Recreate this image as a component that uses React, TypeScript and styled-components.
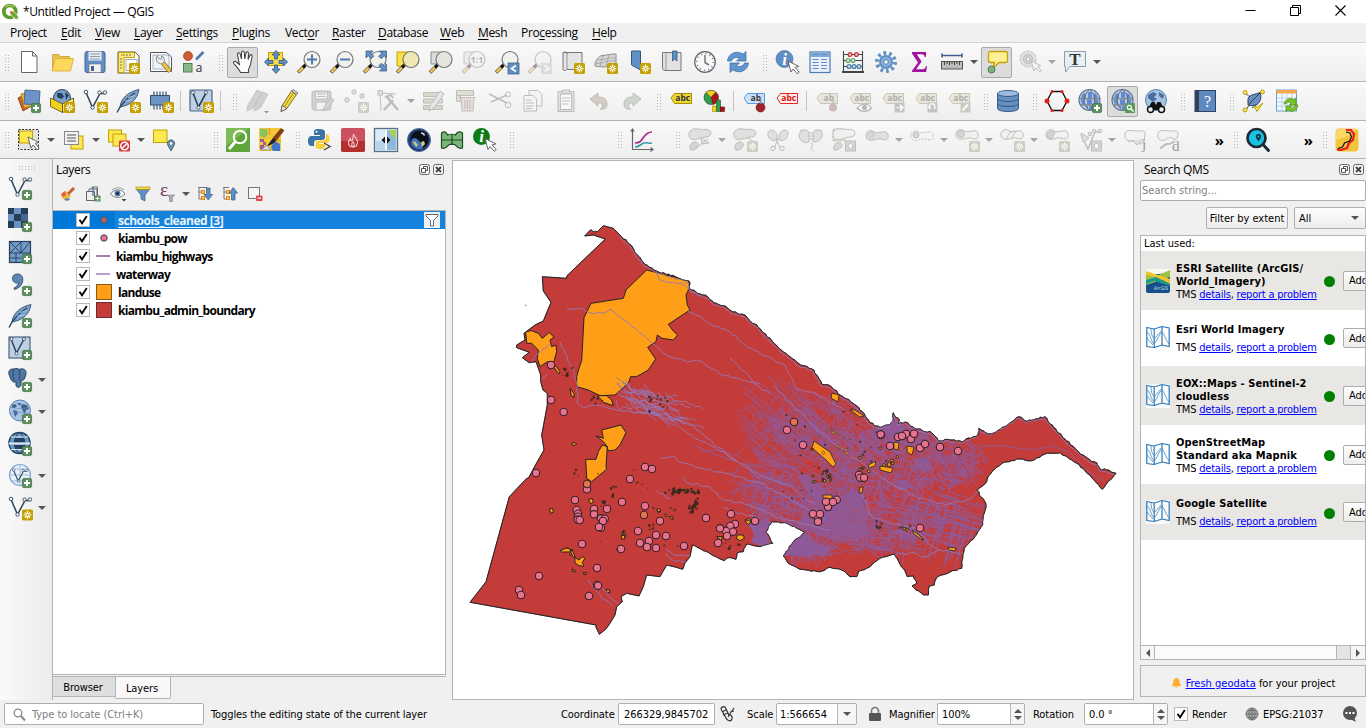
import React from "react";
import styled, { createGlobalStyle } from "styled-components";

const UI = '"Open Sans", "Noto Sans", sans-serif';
const TAHOMA = '"DejaVu Sans Condensed", "DejaVu Sans", sans-serif';
const SERIF = '"Liberation Serif", serif';
const LINE = "#b4b4b4";

const Global = createGlobalStyle`
  body { margin: 0; background: #f0f0f0; overflow: hidden; }
  * { box-sizing: border-box; }
`;

/* ---------- shared icon parts ---------- */
const Star = ({ x = 13, y = 13, c = "#c4a000" }: { x?: number; y?: number; c?: string }) => (
  <g transform={`translate(${x} ${y})`}>
    <rect width="11" height="11" rx="1.5" fill={c} />
    <path d="M5.5 1.5v8M1.500 5.500h8M2.800 2.800l5.400 5.400M8.200 2.800l-5.400 5.400" stroke="#fff" strokeWidth="1.200" />
    <circle cx="5.500" cy="5.500" r="1.100" fill={c} />
  </g>
);
const Plus = ({ x = 14, y = 14 }: { x?: number; y?: number }) => (
  <g transform={`translate(${x} ${y})`}>
    <rect x=".4" y=".4" width="9.200" height="9.200" rx="1.500" fill="#5b8f5c" stroke="#3f6f40" strokeWidth=".7" />
    <path d="M5 2v6M2 5h6" stroke="#fff" strokeWidth="2" />
  </g>
);
const Cursor = ({ x = 12, y = 10 }: { x?: number; y?: number }) => (
  <path transform={`translate(${x} ${y})`} d="M0 0l3 11 2.200-3 4 4.800 2-1.600-4-4.800 3.600-1z" fill="#fff" stroke="#555" strokeWidth=".9" />
);
const Lens = ({ fill = "#f2f2ec" }: { fill?: string }) => (
  <g>
    <path d="M1 22.500l7-7" stroke="#555" strokeWidth="3.600" />
    <path d="M1.500 22l4.500-4.500" stroke="#f5c84c" strokeWidth="2.400" />
    <path d="M6 17.500l3-3" stroke="#111" strokeWidth="2.600" />
    <circle cx="15" cy="9.500" r="8" fill={fill} stroke="#777" strokeWidth="1.200" />
  </g>
);
const Nodes = () => (
  <g fill="none" stroke="#2f4458">
    <path d="M3 3.500l6.500 15L17 4.500h5" strokeWidth="1.500" />
    <g fill="#fff" strokeWidth=".9">
      <circle cx="3" cy="3" r="1.800" /><circle cx="9.500" cy="18.500" r="1.700" /><circle cx="16.500" cy="3.500" r="1.700" /><circle cx="22" cy="3.500" r="1.700" />
    </g>
  </g>
);
const Feather = () => (
  <g>
    <path d="M4 18C5 9 12 3 23 .5 22 6 20 10 16 13c-4 3-7 4-10 4.500z" fill="#7ba0cc" stroke="#33526f" strokeWidth=".9" />
    <path d="M1 23.500C5 15 11 9 19 4" stroke="#25415c" strokeWidth="1.300" fill="none" />
    <path d="M9 12l8-1M12 8.500l7-2" stroke="#b7cde6" strokeWidth=".8" fill="none" />
  </g>
);
const QmsGlobe = () => (
  <g>
    <circle cx="11.500" cy="11" r="10.500" fill="#b9cde4" stroke="#5b7394" strokeWidth="1.100" />
    <path d="M5 4.500h3v4.500H3zM10 3h4v6h-4zM15.500 4.500h2.500l2 4.500h-4.500zM2.500 10.500H7v5H4zM9 10.500h5v5H9zM16 10.500h4.500l-1 5H16zM7 17h3v3zM11 17h4v3.500h-4z" fill="#4f7cd0" opacity=".85" />
    <path d="M11.500.5c-7 6-7 15 0 21M11.500.5c7 6 7 15 0 21M1 9.800h21M2.500 16h18" stroke="#6a6f70" fill="none" strokeWidth="1" />
  </g>
);
const Tag = ({ t = "abc", fill, stroke, color, y = 5 }: { t?: string; fill: string; stroke: string; color: string; y?: number }) => (
  <g transform={`translate(0 ${y})`}>
    <path d="M2 5L5.500.5h17v10h-17z" fill={fill} stroke={stroke} />
    <text x="13.800" y="8.400" fontSize="8.500" fontWeight="700" fontFamily={UI} fill={color} textAnchor="middle">{t}</text>
  </g>
);
const Grey = ({ children, o = 0.75 }: { children: React.ReactNode; o?: number }) => (
  <g fill="#d9d9d9" stroke="#acaca7" strokeWidth="1" opacity={o}>{children}</g>
);
const Blob = ({ v = 0 }: { v?: number }) => (
  <path d={["M1 8C0 2 5 0 10 1c4 1 11-1 13 3 0 4-2 5-5 5-4 0-5 2-9 2-4 1-7 1-8-3z", "M1 8C0 2 6 0 9 3c4 2 8-1 12 0 3 2 3 7 0 8-4 0-6-2-9-1-5 2-10 2-11-2z"][v]} />
);
const SmallStar = () => <Star x={14} y={13} c="#c4c1b2" />;

const icons: Record<string, React.ReactNode> = {
  newDoc: <path d="M4.500 1.500h11l4.500 4.500v16.500H4.500zM15.500 1.500V6H20" fill="#fff" stroke="#666" />,
  open: <g><path d="M2.500 20V4.500h6l2 2h9V9" fill="#eac24f" stroke="#c99b2a" strokeWidth=".8" /><path d="M2 21L5 8.500h18.500l-3 12.500z" fill="#fbd75b" stroke="#d9aa2f" strokeWidth=".8" /></g>,
  save: <g><rect x="2" y="1.500" width="20" height="21" rx="2" fill="#5f8fc4" stroke="#41658e" /><rect x="5.500" y="1.500" width="13" height="9" fill="#e9eef4" /><path d="M7 4h10M7 6.500h10M7 9h10" stroke="#8e99a5" /><rect x="6" y="14" width="12" height="8.500" fill="#f1f1f1" stroke="#778" strokeWidth=".6" /><rect x="8" y="16" width="3" height="5" fill="#41658e" /></g>,
  layout: <g><path d="M2 2h17l4 4v17H2z" fill="#fff" stroke="#555" /><path d="M2.500 2.500h16v5H8v15H2.500z" fill="#f7e98e" stroke="#c4a000" /><path d="M5 5h1.500M8 4v2M11 4v2M14 4v2M4 9h2M4 12h2M4 15h2M4 18h2" stroke="#8a7200" /><rect x="10" y="9.500" width="11" height="11" fill="none" stroke="#aaa" /><Star /></g>,
  layoutMgr: <g><path d="M1.500 2.500h16l5 4.500v14.500h-21z" fill="#fff" stroke="#555" /><rect x="4" y="5" width="16" height="14" fill="#f0f4fa" stroke="#8ba0c0" strokeWidth=".8" /><path d="M14 13l7 8.500" stroke="#8a7420" strokeWidth="4.600" /><path d="M14 13l7 8.500" stroke="#e8c44a" strokeWidth="3" /><path d="M8.500 5.500c0 2 .5 3 2.500 3.500s2-1 1.500-3c3 1 3.500 4 2 6.500-2 2.500-6 1-7-2-.5-2-.2-4 1-5z" fill="#eee" stroke="#777" strokeWidth=".9" /></g>,
  style: <g><circle cx="6" cy="6" r="4.500" fill="#cf5b36" stroke="#9b3b1f" strokeWidth=".7" /><path d="M14 9.500l7.500-7.500" stroke="#4d7ab0" strokeWidth="2.600" /><rect x="1.500" y="13.500" width="8.500" height="8.500" fill="#8ab68a" stroke="#50804f" /><text x="13.500" y="22" fontFamily={UI} fontSize="12.500" fill="#333">a</text></g>,
  hand: <path d="M8.500 22.500C7 19 4 16 1.800 13.500c-1.200-2 1.200-3 2.600-1.500l3 2.500L5.500 4.500c-.3-2 2-2.500 2.600-.6L9.500 9V2.500c0-2 2.700-2 2.800 0L12.800 9l1.200-6c.5-1.800 2.700-1.200 2.500.6L16 9.500l1.800-4c.8-1.600 2.800-.8 2.300 1-1 4.500-1.200 9-3.600 13v3z" fill="#fff" stroke="#444" strokeWidth="1.100" transform="translate(1 0)" />,
  pan: <g><rect x="4.500" y="2.500" width="14" height="13" fill="#f7e04a" stroke="#c4a000" /><path d="M12 .5l4 4.500h-2.500v4h-3V5H8zM23.500 12l-4 4v-2.500H15v-3h4.500V8zM12 23.500l4-4.500h-2.500v-4h-3v4H8zM.5 12l4-4v2.500H9v3H4.500V16z" fill="#5f8fc4" stroke="#35577d" strokeWidth=".8" /></g>,
  zoomIn: <g><Lens /><path d="M15 4.500v10M10 9.500h10" stroke="#4d7ab0" strokeWidth="2" /></g>,
  zoomOut: <g><Lens /><path d="M10 9.500h10" stroke="#4d7ab0" strokeWidth="2" /></g>,
  zoomFull: <g><Lens /><path d="M3 1h7L7.800 3.200l3 3L8.200 8.800l-3-3L3 8zM23.500 1v7l-2.200-2.200-3 3-2.600-2.600 3-3L16.500 1zM23.500 21h-7l2.200-2.200-3-3 2.600-2.600 3 3 2.200-2.200z" fill="#5f8fc4" stroke="#35577d" strokeWidth=".7" /></g>,
  zoomSel: <g><path d="M1 2h14v14H1z" fill="#f7e04a" stroke="#c4a000" /><Lens fill="#efe7b4" /></g>,
  zoomLayer: <g><path d="M2 2h12v12H2z" fill="#ddd" stroke="#888" /><Lens fill="#e4e6de" /></g>,
  zoomNative: <g opacity=".4"><path d="M2 2h12v12H2z" fill="#ddd" stroke="#888" /><Lens /><text x="15" y="13" fontFamily={UI} fontSize="9" fontWeight="700" textAnchor="middle" fill="#555">1:1</text></g>,
  zoomLast: <g><Lens /><rect x="13" y="13" width="11" height="11" fill="#5f8fc4" stroke="#35577d" strokeWidth=".7" /><path d="M21 15.500l-4.500 3 4.500 3" stroke="#fff" strokeWidth="1.700" fill="none" /></g>,
  zoomNext: <g opacity=".4"><Lens /><rect x="13" y="13" width="11" height="11" fill="#bbb" /><path d="M16.500 15.500l4.500 3-4.500 3" stroke="#fff" strokeWidth="1.700" fill="none" /></g>,
  mapView: <g><path d="M2 2.500h19v17H5.500a2 2 0 01-3.500-2z" fill="#e4e4e4" stroke="#777" /><path d="M6 3v16" stroke="#999" /><path d="M2 2.500c2-1 4-.5 4 1.500" stroke="#777" fill="none" /><Star /></g>,
  view3d: <g><path d="M1 16C1 10 5 6 8 5.500c5 0 9-2 14-1.500v11c-5-2-8 2-12 2-3-.5-6 0-9-1z" fill="#d6d6d6" stroke="#8e8e8e" /><path d="M4 10c6 0 12-3 18-2M2 13.500c8 0 12-4 20-2.500M9 5.500L6 16M15 4.500l-3 12" stroke="#a0a0a0" strokeWidth=".8" fill="none" /><Star /></g>,
  bookmark: <g><path d="M4.500 1h9v19l-9-5z" fill="#5f8fc4" stroke="#35577d" /><Star /></g>,
  bookmarks: <g><path d="M2.500 2.500h18.500v18H6a3 3 0 01-3.500-2z" fill="#e2e2e2" stroke="#777" /><path d="M6 3v17" stroke="#999" /><path d="M12.500 1h4.500v10l-2.300-2-2.200 2z" fill="#5f8fc4" stroke="#35577d" strokeWidth=".8" /></g>,
  clock: <g><circle cx="12" cy="12" r="10.300" fill="#f7f7f7" stroke="#666" strokeWidth="1.200" /><circle cx="12" cy="12" r="8.300" fill="none" stroke="#4d7ab0" strokeWidth="1.500" strokeDasharray="1 3.350" /><path d="M12 5v7.500l4 2.500" stroke="#777" strokeWidth="1.500" fill="none" /></g>,
  refresh: <g fill="#5f96d0" stroke="#3b6ba3" strokeWidth=".7"><path d="M1.500 11C2 4 10-.5 17 4l3-2.500V11h-9.500l3-3c-3-1.500-7 0-8 3z" /><path d="M22.500 13c-.5 7-8.500 11.500-15.500 7l-3 2.500V13h9.500l-3 3c3 1.500 7 0 8-3z" /></g>,
  identify: <g><circle cx="9.500" cy="9" r="8.500" fill="#5f8fc4" stroke="#41658e" strokeWidth=".6" /><text x="9.500" y="14.500" fontFamily={SERIF} fontStyle="italic" fontWeight="700" fontSize="17" fill="#fff" textAnchor="middle">i</text><Cursor x={13} y={11} /></g>,
  table: <g><rect x="2" y="2" width="20" height="20.500" fill="#e9f1fb" stroke="#4d7ab0" strokeWidth="1.200" /><rect x="2.500" y="2.500" width="19" height="4.500" fill="#7fa9d8" /><path d="M4.500 4.500h6M13 4.500h6M4.500 9.500h6M13 9.500h6M4.500 12.500h6M13 12.500h6M4.500 15.500h6M13 15.500h6M4.500 18.500h6M13 18.500h6" stroke="#5f8fc4" strokeWidth="1.200" /></g>,
  abacus: <g fill="none"><path d="M2.500 1v21M21.500 1v21M2.500 4.500h19M2.500 10.500h19M2.500 16.500h19" stroke="#444" strokeWidth="1.100" /><path d="M1 22h22" stroke="#444" strokeWidth="2" /><g strokeWidth="1.300"><g stroke="#c03535" fill="#f3c6c6"><circle cx="9" cy="4.500" r="1.900" /><circle cx="15.500" cy="4.500" r="1.900" /></g><g stroke="#6aa66a" fill="#d9f0d9"><circle cx="7" cy="10.500" r="1.900" /><circle cx="12" cy="10.500" r="1.900" /></g><g stroke="#5080a8" fill="#cde2f3"><circle cx="8" cy="16.500" r="1.900" /><circle cx="13" cy="16.500" r="1.900" /><circle cx="18" cy="16.500" r="1.900" /></g></g></g>,
  gear: <g><circle cx="12" cy="12" r="9" fill="none" stroke="#5f8fc4" strokeWidth="4" strokeDasharray="2.700 2.955" /><circle cx="12" cy="12" r="6" fill="#8cb1de" stroke="#5f8fc4" strokeWidth="2" /><circle cx="12" cy="12" r="2.300" fill="#f7f7f7" stroke="#4d7ab0" /></g>,
  sigma: <path d="M5 2h14v5h-1.200c-.5-2-1.500-2.700-3.500-2.700H9.800L14.600 11.500 9.200 19.200h6.300c2 0 3-1 3.500-3.200h1l-.8 6H5v-1.300l6-8.200L5 3.400z" fill="#a312a0" />,
  measure: <g><path d="M2 5.500h20M2 3.500v4M22 3.500v4" stroke="#3d5f8a" strokeWidth="1.600" /><rect x="1.500" y="11.500" width="21" height="7.500" fill="#bdbdbd" stroke="#555" /><path d="M4.500 12v3M7 12v2M9.500 12v3M12 12v2M14.500 12v3M17 12v2M19.500 12v3" stroke="#444" /></g>,
  tip: <g><path d="M5.500 1.500h15a2 2 0 012 2v7a2 2 0 01-2 2H14l-6 6 1.500-6h-4a2 2 0 01-2-2v-7a2 2 0 012-2z" fill="#fcef94" stroke="#c4a000" strokeWidth="1.300" /><circle cx="6.500" cy="19.500" r="3.500" fill="#7fb07f" stroke="#50804f" /></g>,
  action: <Grey><circle cx="10" cy="9" r="8" strokeDasharray="3 1.500" /><circle cx="10" cy="9" r="4.500" fill="#c9c9c9" /><path d="M8.500 6.500l4.500 2.500-4.500 2.500z" fill="#fff" /><path d="M13 11l3 10 2-3 4 4 1.500-1.500-4-4 3-1z" fill="#f4f4f4" /></Grey>,
  textAnn: <g><path d="M1.500 1.500h21v15H7L2.500 22v-5.500h-1z" fill="#e8f0f6" stroke="#8a9aa6" /><text x="12" y="14.500" fontFamily={SERIF} fontWeight="700" fontSize="17" fill="#333" textAnchor="middle">T</text></g>,

  dsManager: <g strokeWidth=".9"><path d="M1 9l12-6 5 12-12 7z" fill="#c8622d" stroke="#8f4019" /><path d="M4 5l14-2 2 13-13 3z" fill="#eab33c" stroke="#a77a12" /><path d="M8 1l15 1-1 14-15-1z" fill="#6b93c5" stroke="#3d628f" /><Plus /></g>,
  geopkg: <g><circle cx="12" cy="9" r="8.500" fill="#7d9fc6" stroke="#24425f" /><path d="M7 4l5 0 2 4-3 2-4-2zM15 3l4 3-3 5" fill="#24425f" /><path d="M.5 9l12 6v8.500l-12-6z" fill="#f2d21f" stroke="#564a10" strokeWidth=".8" /><path d="M12.500 15l11-6v8.500l-11 6z" fill="#fbe65c" stroke="#564a10" strokeWidth=".8" /><Star x={14} /></g>,
  shp: <g><Nodes /><Star x={14} /></g>,
  spatialite: <g><Feather /><Star x={14} /></g>,
  memory: <g><path d="M5 2.500v18M8 2.500v18M11 2.500v18M14 2.500v18M17 2.500v18" stroke="#33526f" strokeWidth="1.200" /><rect x="1.500" y="6.500" width="19" height="9.500" fill="#6b93c5" stroke="#33526f" /><Star x={14} /></g>,
  virtual: <g><rect x="1" y="1" width="22" height="21" rx="1" fill="#bdd0e6" stroke="#4a6380" strokeWidth="1.200" /><path d="M4 4l5.500 14L17 4" stroke="#2f4458" strokeWidth="1.600" fill="none" /><circle cx="4" cy="3.500" r="1.600" fill="#fff" stroke="#2f4458" strokeWidth=".8" /><circle cx="17" cy="3.500" r="1.600" fill="#fff" stroke="#2f4458" strokeWidth=".8" /><circle cx="9.500" cy="18.500" r="1.600" fill="#fff" stroke="#2f4458" strokeWidth=".8" /><Star x={14} /></g>,
  edits: <Grey><path d="M2 22l1-6L12 1l5 2.500L8 19zM9 22l1-6L18 3l5 2.500L15 19z" fill="#c9c4c4" stroke="#b9b4b4" /><path d="M19 22h5l-2.500 2.500z" fill="#777" stroke="none" /></Grey>,
  pencil: <g><path d="M3 22.500l1.200-6L13.500 2l5 3.500L8.800 19.500z" fill="#f2d944" stroke="#6f6118" strokeWidth=".9" /><path d="M6.500 17.500L15.500 4" stroke="#b39a1c" strokeWidth="1.200" /><path d="M3 22.500l1.200-6 4.600 3z" fill="#eee" stroke="#555" strokeWidth=".8" /><path d="M13.500 2l1.500-1.500 5 3.500-1.500 1.500z" fill="#ddd" stroke="#555" strokeWidth=".8" /></g>,
  saveEdits: <Grey><rect x="1" y="2" width="19" height="19" rx="2" fill="#c6c6c6" /><rect x="4.500" y="3" width="12" height="7" fill="#f3f3f3" /><path d="M6 5h9M6 7.500h9" /><rect x="5" y="13" width="10" height="8" fill="#f3f3f3" /><path d="M12 22l1-4 7-9 3 2-7 9z" fill="#ccc" /></Grey>,
  addPoint: <Grey><circle cx="10" cy="3" r="2.200" /><circle cx="3" cy="11" r="2.200" /><circle cx="18" cy="7" r="2.200" /><g stroke="none"><SmallStar /></g></Grey>,
  vertex: <Grey><path d="M4 22L3 4l16 1" fill="none" /><rect x="1" y="1.500" width="4.500" height="4.500" /><path d="M7 21l9-10M10 8l11 13" strokeWidth="2.500" fill="none" /><path d="M8 8l6-2 2 3" fill="none" strokeWidth="2" /></Grey>,
  multiEdit: <Grey><path d="M1.500 3.500h19v4h-19zM1.500 10h19v4h-19zM1.500 16.500h19v4h-19z" fill="#cfcfc0" /><path d="M7 22l1-5L18 2l4 3-10 14z" fill="#e2e2e2" /></Grey>,
  trash: <Grey><path d="M1.500 1.500h17v5h-17zM1.500 6.500h4v6h-4z" fill="#d8d8cc" /><path d="M4 8.500h17M6 8.500l1 13.500h11l1-13.500zM10 11v9M12.500 11v9M15 11v9" fill="#e2d6d6" stroke="#bba9a9" /></Grey>,
  cut: <Grey><path d="M1 5l18 9M3 13l16-7" fill="none" strokeWidth="1.600" /><circle cx="20" cy="5.500" r="2.600" fill="none" /><circle cx="20" cy="16" r="2.800" fill="none" /></Grey>,
  copy: <Grey><path d="M8 1.500h9l4 4V17H8z" fill="#f2f2f2" /><path d="M3 6.500h9l3.500 3.500V22H3z" fill="#f6f6f6" /><path d="M5 11h6M5 14h8M5 17h8M5 19.500h6" /></Grey>,
  paste: <Grey><rect x="4" y="2.500" width="16" height="20" /><rect x="6.500" y="5" width="11" height="15.500" fill="#fafafa" /><path d="M8 9h8M8 12h8M8 15h6" /><rect x="8.500" y="1" width="7" height="3.500" /></Grey>,
  undo: <Grey><path d="M3 10l8-6v4c6 0 9 2 9 7s-3 5-7 5.500c2-1.500 3-3 2-5-.6-1.300-2-1.500-4-1.500V17z" fill="#cbbfb1" /></Grey>,
  redo: <Grey><path d="M21 10l-8-6v4c-6 0-9 2-9 7s3 5 7 5.500c-2-1.500-3-3-2-5 .6-1.300 2-1.500 4-1.500V17z" fill="#c6cdbf" /></Grey>,
  label: <Tag fill="#ecd733" stroke="#a68d00" color="#333" y={4} />,
  diagram: <g><circle cx="9" cy="8.500" r="7" fill="#2f9e46" stroke="#333" strokeWidth=".6" /><path d="M9 8.500L4 3.500a7 7 0 0110-.2z" fill="#f2cf1b" stroke="#333" strokeWidth=".5" /><path d="M9 8.500l5-5.200a7 7 0 01-3 12.200z" fill="#b5121b" stroke="#333" strokeWidth=".5" /><rect x="10.500" y="17" width="4" height="5.500" fill="#f2cf1b" stroke="#a68d00" strokeWidth=".6" /><rect x="14.500" y="11" width="4" height="11.500" fill="#2f9e46" stroke="#14592a" strokeWidth=".6" /><rect x="18.500" y="18" width="4" height="4.500" fill="#b5121b" stroke="#600" strokeWidth=".6" /></g>,
  labelPin: <g><Tag t="ab" fill="#c9e2fb" stroke="#5a9be0" color="#333" y={4} /><circle cx="18.500" cy="18.500" r="4.500" fill="#a3232a" stroke="#6d1319" strokeWidth=".6" /><path d="M18.500 15V9" stroke="#888" strokeWidth="1.500" /></g>,
  labelRed: <Tag fill="#fff0f0" stroke="#f02020" color="#e01010" y={4} />,
  lb1: <g opacity=".5"><Tag t="ab" fill="#ded9c4" stroke="#a09a80" color="#666" y={4} /><circle cx="18" cy="18.500" r="4" fill="#a9807f" /><path d="M18 15v-6" stroke="#988" strokeWidth="1.500" /></g>,
  lb2: <g opacity=".5"><Tag fill="#ded9c4" stroke="#a09a80" color="#666" y={4} /><path d="M9 19c4-5 11-5 14.500 0-4 4.500-10 4.500-14.500 0z" fill="#fff" stroke="#777" strokeWidth="1.200" /><circle cx="16.500" cy="18.500" r="2.500" fill="#777" /></g>,
  lb3: <g opacity=".5"><Tag fill="#ded9c4" stroke="#a09a80" color="#666" y={4} /><rect x="13.500" y="13.500" width="10" height="10" fill="#999" /><path d="M15.500 18.500h4v-3l3 3-3 3.500v-3" fill="#fff" stroke="#fff" /></g>,
  lb4: <g opacity=".5"><Tag fill="#ded9c4" stroke="#a09a80" color="#666" y={4} /><rect x="13.500" y="13.500" width="10" height="10" fill="#999" /><path d="M16 20a3 3 0 114 0M16 20v-3" fill="none" stroke="#fff" strokeWidth="1.500" /></g>,
  lb5: <g opacity=".5"><Tag fill="#ded9c4" stroke="#a09a80" color="#666" y={4} /><rect x="13.500" y="13.500" width="10" height="10" fill="#aaa68e" /><path d="M15.500 21.500l5.500-6" stroke="#fff" strokeWidth="2" /></g>,
  db: <g stroke="#30527a" strokeWidth=".9"><path d="M1.500 4.500v15c0 4 21 4 21 0v-15" fill="#6490c4" /><ellipse cx="12" cy="4.500" rx="10.500" ry="3" fill="#9dbce0" /><path d="M1.500 9.500c0 4 21 4 21 0M1.500 14.500c0 4 21 4 21 0" fill="none" /></g>,
  hexagon: <g><path d="M7 2.500h10l5 9.500-5 9.500H7L2 12z" fill="none" stroke="#111" strokeWidth="1.300" /><g fill="#e81c1c"><circle cx="7" cy="2.500" r="1.500" /><circle cx="17" cy="2.500" r="1.500" /><circle cx="7" cy="21.500" r="1.500" /><circle cx="17" cy="21.500" r="1.500" /><circle cx="2" cy="12" r="2.500" /><circle cx="22" cy="12" r="2.500" /></g></g>,
  qmsAdd: <g><QmsGlobe /><Plus /></g>,
  qmsSearch: <g><QmsGlobe /><rect x="14" y="14" width="10" height="10" rx="1" fill="#5b9a5c" /><circle cx="18.300" cy="18.300" r="2" fill="none" stroke="#fff" strokeWidth="1.200" /><path d="M20 20l2.500 2.500" stroke="#fff" strokeWidth="1.400" /></g>,
  binoculars: <g><circle cx="12" cy="11" r="10.500" fill="#a6c4e4" stroke="#5a80ae" /><path d="M4 6l5-3 4 2-3 3 3 2-4 3-5-4zM15 3l5 3-1 4-4-3z" fill="#4b6f9d" /><path d="M3.500 21l4-8h3l1.500 3 1.500-3h3l4 8z" fill="#111" /><circle cx="6.500" cy="20.500" r="3" fill="#eee" stroke="#111" strokeWidth="1.500" /><circle cx="17.500" cy="20.500" r="3" fill="#eee" stroke="#111" strokeWidth="1.500" /></g>,
  help: <g><rect x="2" y="1.500" width="20.500" height="21" fill="#5f88c0" stroke="#2c4263" /><rect x="2" y="1.500" width="4" height="21" fill="#33415a" /><text x="14.500" y="17.500" fontFamily={SERIF} fontSize="16" fill="#fff" textAnchor="middle">?</text></g>,
  topology: <g><path d="M6 10C7 5 13 6 18 3.500c2 5 0 10-3 12-3 1-8 2-9 0z" fill="#6a90c4" stroke="#2c4263" /><path d="M3 4l5 4M4 21l5-8 9-9M14 16l-4 3" stroke="#333" strokeWidth=".9" fill="none" /><g fill="#fbe640" stroke="#a68d00" strokeWidth=".8"><circle cx="3" cy="3.500" r="2" /><circle cx="20.500" cy="3" r="2" /><circle cx="3" cy="21" r="2" /><path d="M12 17l3 5.500 6-8.500-5.500 4z" /></g></g>,
  tableRefresh: <g><rect x="1.500" y="1" width="20" height="21" fill="#f3f8fc" stroke="#6aa0d0" /><rect x="1.500" y="1" width="20" height="3.500" fill="#f5a94a" /><path d="M2 9h19M2 13h19M2 17h19M7 4v18M12 4v18M17 4v18" stroke="#a9cbe4" strokeWidth=".8" /><path d="M9 15c1-5 7-7 10-4l2-2v7h-7l2-2c-2-2-4-1-5 1zM23 16c-1 6-7 8-10 5l-2 2v-6h6l-2 2c2 1 4 0 5-3z" fill="#7cc428" stroke="#4a8a10" strokeWidth=".7" /></g>,

  select: <g><rect x="1.500" y="1.500" width="20" height="20" fill="#e4e4e4" stroke="#333" strokeDasharray="2 1.500" /><rect x="2.500" y="3" width="13" height="12" fill="#fce94f" stroke="#c4a000" /><Cursor x={11} y={9} /></g>,
  selectForm: <g><rect x="9" y="8" width="12" height="13" fill="#fce94f" stroke="#c4a000" /><rect x="2.500" y="3.500" width="14" height="13" fill="#f1f1f1" stroke="#888" /><path d="M5 7h9M5 10h9M5 13h9" stroke="#888" strokeWidth="1.500" /></g>,
  deselect: <g><rect x="1.500" y="2" width="13" height="12" fill="#fce94f" stroke="#c4a000" /><rect x="6" y="6" width="13" height="12" fill="#fce94f" stroke="#c4a000" /><rect x="12" y="12.500" width="11" height="11" rx="1" fill="#d9363e" /><circle cx="17.500" cy="18" r="3.800" fill="none" stroke="#fff" strokeWidth="1.500" /><path d="M15 20.500l5-5" stroke="#fff" strokeWidth="1.400" /></g>,
  selectLoc: <g><rect x="1.500" y="2" width="13.500" height="12.500" fill="#fce94f" stroke="#c4a000" /><path d="M19 23l-3-5.500a3.600 3.600 0 116 0z" fill="#6d8fa8" stroke="#47697f" /><circle cx="19" cy="15.500" r="1.300" fill="#fff" /></g>,
  osmGreen: <g><rect width="24" height="24" fill="#5fa63a" /><path d="M0 0h24L0 18z" fill="#7dbb55" /><circle cx="14" cy="9" r="6.300" fill="none" stroke="#fff" strokeWidth="2" /><path d="M9.500 13.500L3 21" stroke="#fff" strokeWidth="3" /></g>,
  osmMap: <g><rect width="22" height="23" fill="#f3c93a" /><path d="M1 1h7l1 5-3 4-5-2z" fill="#8cc05a" /><path d="M1 11h4v3H1zM4 14h3v3H4zM1 17h4v4H1z" fill="#a35a94" /><path d="M10 0l1 7M15 22l-2-7 5-3 4 1" stroke="#e8a020" strokeWidth="1.500" fill="none" /><path d="M12 19l4-6 5 3v7h-7z" fill="#3f74d0" /><path d="M2 22l6-5 4 5z" fill="#d5dcec" stroke="#555" strokeWidth=".5" /><path d="M14 10L22 .500l3 2-8 10z" fill="#8a3c14" stroke="#5a2408" strokeWidth=".6" /><path d="M8 18l6-8 3 2.500c-2 3-5 4.500-9 5.500z" fill="#222" /></g>,
  python: <g><path d="M11 1c-5 0-5 1.500-5 3v3h6v1H4c-3 0-4 2-4 5s1 5 3.500 5H6v-3c0-2 1.500-3 3-3h5c2 0 3-1 3-3V4c0-2-2-3-6-3z" fill="#3b73a6" /><path d="M12 21c5 0 5-1.500 5-3v-2h-6v-1h7c3 0 3.500-2 3.500-4.500S20.500 6 18 6v3c0 2-1 3.500-3 3.500h-4c-2 0-3.500 1-3.500 3V18c0 2 1 3 4.500 3z" fill="#fbcf3c" /><circle cx="8.500" cy="3.700" r="1" fill="#fff" /><path d="M16 15l6 3.500-6 3.500" fill="none" stroke="#444" strokeWidth="1.400" /></g>,
  fire: <g><rect width="24" height="24" rx="2" fill="#cc5060" /><path d="M0 13h24v9a2 2 0 01-2 2H2a2 2 0 01-2-2z" fill="#b52f2e" /><path d="M12.500 6c.5 3 4 4.500 4 8s-2.200 5-4.500 5-4.500-1.500-4.500-4.500c0-2 1-3 1.800-4 0 2 .8 2.500 1.700 2.500 1-2 1-4.500 1.500-7zM12 19c-2-1.500-1.500-4 0-5 1.500 1.500 2 3.500 0 5z" fill="none" stroke="#f3cfd2" strokeWidth="1.100" /></g>,
  swipe: <g><rect x=".5" y=".5" width="23" height="23" fill="#dbeaf5" stroke="#5a6f85" strokeWidth="1.300" /><path d="M13 2h9v20h-9z" fill="#8fb8d8" /><path d="M15 2h7v8c-4-1-6-4-7-8z" fill="#a8cf5d" /><path d="M2 14c4-3 6 1 10-2v10H2z" fill="#b6d4ea" /><path d="M12 2v20" stroke="#fff" strokeWidth="1.500" /><path d="M7.500 12L11 8.500v7zM16.500 12L13 8.500v7z" fill="#111" /></g>,
  earth: <g><circle cx="12" cy="12" r="11.500" fill="#22386e" stroke="#5470a0" /><circle cx="12.500" cy="11.500" r="9" fill="#0b0f1c" /><path d="M4 14c1-5 5-5 8-1 3 2 5 5 3 8-5 1-11-2-11-7z" fill="#3f75b5" /><path d="M6 14c2-2 3 1 5 3l-2 2zM14 14l3-1 1 3-3 3z" fill="#d8c878" /><path d="M14 5c2 0 3 1 3.500 2.500" stroke="#ddd" strokeWidth="1.600" fill="none" /></g>,
  mesh: <g fill="#7ab67a" stroke="#1f4a20" strokeWidth="1.200"><path d="M1.500 5c3-2 5-1 6 2 2-1 6-1 8 0 1-3 4-4 7-2v7H1.500zM1.500 12h21v8c-3 1-5 0-7-3-2-1-5-1-7 0-2 3-4 4-7 3z" /><path d="M12 6.500v10.500" /></g>,
  identifyG: <g><circle cx="8.500" cy="8.500" r="8.500" fill="#0c7d16" /><text x="8.500" y="14" fontFamily={SERIF} fontStyle="italic" fontWeight="700" fontSize="17" fill="#fff" textAnchor="middle">i</text><Cursor x={12} y={10.500} /></g>,
  profile: <g fill="none"><path d="M2.500 1v20.500H23M.8 3.500L2.500 1l1.700 2.500M20.500 19.500l2.500 2-2.500 2" stroke="#666" strokeWidth="1.200" /><path d="M5 15c5 0 6-2 8-5s5-6 9-6" stroke="#b0288c" strokeWidth="1.700" /><path d="M5 19c5 0 5-3 9-4s5 1 8 0" stroke="#3a9aae" strokeWidth="1.700" /></g>,
  ad1: <Grey><Blob /><path d="M3 22c-3-4 1-9 5-8s3 8-5 8z" fill="#ccc" /><path d="M8 20l12-9M13 9l8 6-7 1z" fill="#e6e6e6" /></Grey>,
  ad2: <Grey><Blob /><path d="M3 22c-3-4 1-9 5-8s3 8-5 8z" fill="#d0d0d0" /><path d="M13 9l7 4" /><g stroke="none"><SmallStar /></g></Grey>,
  ad3: <Grey><path d="M11 12C6 14 1 10 2 5s8-3 9 2zM13 12c5 2 9-2 9-7s-8-3-9 2zM8 22l4-12M15 22L10 10" /><circle cx="7" cy="20.500" r="2.200" fill="#f2f2f2" /><circle cx="16" cy="20.500" r="2.200" fill="#f2f2f2" /></Grey>,
  ad4: <Grey><path d="M2 2h5c2 0 3 2 3 4v8C4 16 0 12 0 7zM14 6c0-2 1-4 3-4h5c3 5 1 12-8 12zM10 5h4M10 8h4M10 11h4" /><path d="M12 15c5 2-4 4 3 8" fill="none" /></Grey>,
  ad5: <Grey><rect x="1" y="1" width="12" height="12" fill="#dedac4" strokeDasharray="2 1" /><g fill="#eee"><Blob /></g><path d="M2 22c-1-5 2-8 6-7s2 7-6 7z" fill="#d0d0d0" /><rect x="13.500" y="13" width="10" height="10" fill="#ccc" /><circle cx="18.500" cy="18" r="2.500" fill="#fff" /></Grey>,
  ad6: <Grey><g transform="translate(0 1)"><Blob v={1} /></g><circle cx="6" cy="7" r="3" fill="#ccc" strokeDasharray="1.500 1" /></Grey>,
  ad7: <Grey><g transform="translate(0 1)" strokeDasharray="2 1.500" fill="#f4f4f4"><Blob v={1} /></g><circle cx="6" cy="7" r="3" fill="#ccc" /></Grey>,
  ad8: <Grey><g fill="#f0f0f0"><Blob v={1} /></g><circle cx="6" cy="6" r="3.500" fill="#ccc" /><g stroke="none"><SmallStar /></g></Grey>,
  ad9: <Grey><g fill="#f0f0f0"><Blob v={1} /></g><path d="M7 11c1-5 4-8 8-8M12 10c1-3 2-5 5-7" fill="none" /><g stroke="none"><SmallStar /></g></Grey>,
  ad10: <Grey><g fill="#f0f0f0"><Blob v={1} /></g><path d="M2 7c0-4 5-5 8-3-1 3-2 6-4 7-2 0-4-1-4-4z" fill="#c3c6cc" /><g stroke="none"><SmallStar /></g></Grey>,
  ad11: <Grey><path d="M3 7l7 14 7-17h5" fill="none" strokeWidth="1.500" /><path d="M3 5l2 9 6-4z" /><circle cx="16" cy="3" r="1.800" /><circle cx="22" cy="3" r="1.800" /><circle cx="12" cy="6" r="1.800" /><rect x="13.500" y="13" width="10" height="10" fill="#ccc" /><circle cx="18.500" cy="18" r="2.500" fill="#fff" /></Grey>,
  ad12: <Grey><path d="M2 5c2-4 8-2 12-2s8-1 8 2-1 11-4 11-6-5-9-3C3 14 1 9 2 5z" fill="#f2f2f2" /><path d="M5 14c4-3 6 0 9 3 2-2 4-2 5-6" /><text x="19" y="21" fontFamily={SERIF} fontSize="15" fill="#777" stroke="none">j</text></Grey>,
  ad13: <Grey><path d="M2 5c2-4 8-2 12-2s8-1 8 2-1 8-4 6-6-2-9 1C3 14 1 9 2 5z" fill="#f2f2f2" /><path d="M4 20c3 0 4-4 7-4s4 0 8-3" fill="none" strokeWidth="2" /><text x="16" y="23" fontFamily={SERIF} fontSize="15" fill="#777" stroke="none">d</text></Grey>,
  qpin: <g><circle cx="10.500" cy="10" r="9" fill="#19c3e6" stroke="#1c2b33" strokeWidth="2.700" /><path d="M17 16.500l5.500 6" stroke="#1c2b33" strokeWidth="3" strokeLinecap="round" /><path d="M12.500 13.500L10.200 10a2.700 2.700 0 114.600 0z" fill="#12303a" /><circle cx="12.500" cy="8.500" r="1" fill="#19c3e6" /></g>,
  route: <g><rect x=".5" y=".5" width="23" height="23" rx="4" fill="#f2c43c" /><path d="M1 12C8 10 14 8 22 1H5a4 4 0 00-4 4z" fill="#f8d968" /><path d="M11 2h5l3 4-1 6-4 3-2 5-6 2-4-.5" fill="none" stroke="#ed1c24" strokeWidth="2.200" /><path d="M11 4l4 1 1.500 4-2 4-5 2-2 4-4.500 1.500" fill="none" stroke="#111" strokeWidth="1.200" /></g>,

  vAdd: <g><Nodes /><Plus /></g>,
  raster: <g><rect width="20" height="20" fill="#6b93c5" /><path d="M0 0h6v6H0zM13 0h7v6h-7zM6 6h7v7H6zM0 13h6v7H0zM13 13h7v7h-7z" fill="#263e57" /><path d="M13 6h7v7h-7z" fill="#49688c" /><Plus /></g>,
  meshAdd: <g><rect x="1.500" y="1.500" width="21" height="21" fill="#7399c8" stroke="#263e57" strokeWidth="1.200" /><path d="M1.500 13h21M13 1.500v11.500M2 2l11 11M13 2L2 13M22 2l-9 11M8 13v9.500M1.500 18H13" stroke="#263e57" strokeWidth=".9" /><Plus /></g>,
  comma: <g transform="translate(0 0)"><path d="M9.500 2c4.500 0 6 4 5 8-1 3.500-4 6.500-8 7.500l-.5-1.500c2.500-1 4-3 4.500-5-3.500.5-6-1.500-6-4.500S6.500 2 9.500 2z" fill="#5f86b5" stroke="#2f4b6b" strokeWidth=".9" /><Plus /></g>,
  featherAdd: <g><Feather /><Plus /></g>,
  virtualAdd: <g><rect x="1" y="1" width="21" height="21" fill="#bdd0e6" stroke="#4a6380" strokeWidth="1.200" /><path d="M3 3l5.500 14L16 3" stroke="#2f4458" strokeWidth="1.500" fill="none" /><circle cx="3.500" cy="3" r="1.500" fill="#fff" stroke="#2f4458" strokeWidth=".8" /><circle cx="16" cy="3" r="1.500" fill="#fff" stroke="#2f4458" strokeWidth=".8" /><circle cx="8.500" cy="17.500" r="1.500" fill="#fff" stroke="#2f4458" strokeWidth=".8" /><Plus /></g>,
  postgis: <g><path d="M2 9C-.5 4 1 .5 6 1c2-.8 4-.5 5 .5 3-1.500 7-.5 7 3 0 3-1 5-2 7l-2 1c-1 1-1 2-1 4 0 3-4 4-5 1v-4c-1 1-2 1-3 0-2-1-2.500-3-3-4.500z" fill="#4f78a6" stroke="#24425f" /><path d="M6 1.500c-2 4-1 7 0 11M11 2c2 4 0 7 1 11" stroke="#24425f" fill="none" strokeWidth=".9" /><Plus /></g>,
  wms: <g><circle cx="12" cy="10.500" r="10.500" fill="#a8c4e4" stroke="#5a7db0" /><path d="M4 5l3-1 2 2-2 2H4zM9 3l4 0-1 3zM14 4l5 1 2 4-3 1-1 4-2-3-2-4zM5 10l4 1 1 2-3 4zM18 14l2 1-2 2z" fill="#3f618b" /><path d="M2 7c6 2 14 2 20 0M2 14c6-2 14-2 20 0" stroke="#6f92bf" fill="none" strokeWidth=".7" /><Plus /></g>,
  xyz: <g><circle cx="11.500" cy="11" r="10.500" fill="#6b96c8" stroke="#24425f" strokeWidth="1.400" /><path d="M7 6h9v4.500H7zM7 13h9v4H7z" fill="#24425f" /><path d="M11.500.5c-7 5-7 16 0 21M11.500.5c7 5 7 16 0 21" stroke="#24425f" fill="none" /><path d="M1 11.500h21" stroke="#dfeaf6" strokeWidth="2" /><path d="M3 5h17M3 17.500h17" stroke="#dfeaf6" strokeWidth="1" /><Plus /></g>,
  wfs: <g><circle cx="12" cy="11" r="10.500" fill="#e9f1fa" stroke="#7fa3cf" strokeWidth="1.200" /><path d="M1.500 11h21M12 .5v21M4 5h16M4 17h16" stroke="#9dbbe0" /><g transform="translate(3.500 4) scale(.7)" strokeWidth="2"><Nodes /></g><Plus /></g>,
  vNew: <g><Nodes /><Star x={14} y={13.500} /></g>,
};

const Svg = styled.svg<{ $s?: number }>`
  display: block;
  flex: none;
  width: ${(p) => p.$s ?? 24}px;
  height: ${(p) => p.$s ?? 24}px;
  overflow: visible;
`;
const Icon = ({ n, s }: { n: string; s?: number }) => <Svg $s={s} viewBox="0 0 24 24">{icons[n]}</Svg>;
const Gap = styled.span<{ $w: number }>`width: ${(p) => p.$w}px; flex: none;`;

/* ---------- window chrome ---------- */
const Window = styled.div`
  width: 1366px; height: 728px; overflow: hidden;
  display: flex; flex-direction: column;
  background: #f0f0f0; color: #000;
  font: 11px/13px ${TAHOMA};
`;
const TitleBar = styled.div`
  height: 23px; flex: none; background: #fff;
  display: flex; align-items: center; padding-left: 2px;
  font: 12px/16px ${UI}; letter-spacing: -0.38px;
`;
const TitleText = styled.span`margin-left: 4px; flex: 1;`;
const WindowButtons = styled.div`display: flex; gap: 34px; padding-right: 20px; margin-top: -3px;`;
const MenuBar = styled.div`
  height: 19px; flex: none; display: flex; align-items: center; padding-left: 10px;
  background: #f0f0f0; font: 12px/16px ${UI}; letter-spacing: -0.34px;
`;
const MenuItem = styled.span<{ $w: number }>`width: ${(p) => p.$w}px; white-space: nowrap; u { text-underline-offset: 2px; }`;

const Toolbar = styled.div<{ $h: number; $top?: boolean }>`
  height: ${(p) => p.$h}px; flex: none;
  display: flex; align-items: center;
  background: linear-gradient(#fafafa, #eeeeee);
  border-bottom: 1px solid ${LINE};
  border-top: ${(p) => (p.$top ? "1px solid #d2d2d2" : "none")};
`;
const Handle = styled.div<{ $w: number }>`
  width: ${(p) => p.$w}px; height: 17px; flex: none;
  display: flex; justify-content: flex-end; padding-right: 3px;
  &::after {
    content: ""; width: 5px; height: 17px;
    background: radial-gradient(circle at 50% 50%, #b5b5b5 0.7px, transparent 1px) 0 0 / 3px 3px;
  }
`;
const ToolSlot = styled.div<{ $on?: boolean }>`
  width: 31px; height: 31px; margin: 0 1px; flex: none;
  display: flex; align-items: center; justify-content: center;
  border: 1px solid ${(p) => (p.$on ? "#a9a9a9" : "transparent")};
  border-radius: 2px;
  background: ${(p) => (p.$on ? "#dcdcdc" : "transparent")};
`;
const ArrowSlot = styled.div`width: 12px; flex: none; display: flex; justify-content: center;`;
const Caret = styled.span<{ $dim?: boolean }>`
  width: 0; height: 0; flex: none; border: 4px solid transparent; border-bottom: 0;
  border-top-color: ${(p) => (p.$dim ? "#a4a4a4" : "#555")};
`;
const ToolCaret = styled(Caret)`margin: 0 -2px 0 -3px;`;
const Divider = styled.div`width: 7px; height: 20px; flex: none; border-left: 1px solid #c4c4c4; margin-left: 3px; margin-right: -3px;`;
const More = styled.div<{ $w: number }>`
  width: ${(p) => p.$w}px; flex: none; text-align: right; padding-right: 1px;
  font: 700 15px/16px ${UI};
`;

type Tool = string | ["h", number] | ["more", number];
const ToolRow = ({ items, h, top }: { items: Tool[]; h: number; top?: boolean }) => (
  <Toolbar $h={h} $top={top}>
    {items.map((t, i) => {
      if (Array.isArray(t)) return t[0] === "h" ? <Handle key={i} $w={t[1]} /> : <More key={i} $w={t[1]}>»</More>;
      if (t === "|") return <Divider key={i} />;
      if (t === "v" || t === "w") return <ArrowSlot key={i}><Caret $dim={t === "w"} /></ArrowSlot>;
      const on = t.startsWith("*");
      return <ToolSlot key={i} $on={on}><Icon n={on ? t.slice(1) : t} /></ToolSlot>;
    })}
  </Toolbar>
);

const row1: Tool[] = [["h", 12], "newDoc", "open", "save", "layout", "layoutMgr", "style", ["h", 16], "*hand", "pan", "zoomIn", "zoomOut", "zoomFull", "zoomSel", "zoomLayer", "zoomNative", "zoomLast", "zoomNext", "mapView", "view3d", "bookmark", "bookmarks", "clock", "refresh", ["h", 16], "identify", "table", "abacus", "gear", "sigma", "measure", "v", "*tip", "action", "w", "textAnn", "v"];
const row2: Tool[] = [["h", 12], "dsManager", "geopkg", "shp", "spatialite", "memory", "|", "virtual", "|", ["h", 16], "edits", "pencil", "saveEdits", "addPoint", "vertex", "w", "multiEdit", "trash", "cut", "copy", "paste", "undo", "redo", ["h", 16], "label", "diagram", "|", "labelPin", "labelRed", "|", "lb1", "lb2", "lb3", "lb4", "lb5", ["h", 16], "db", ["h", 16], "hexagon", "qmsAdd", "*qmsSearch", "binoculars", ["h", 16], "help", ["h", 16], "topology", "tableRefresh"];
const row3: Tool[] = [["h", 12], "select", "v", "selectForm", "v", "deselect", "v", "selectLoc", ["h", 41], "osmGreen", "osmMap", ["h", 16], "python", "fire", "swipe", "earth", "mesh", "identifyG", ["h", 16], ["h", 108], "profile", ["h", 25], "ad1", "w", "ad2", "ad3", "ad4", "ad5", "ad6", "w", "ad7", "w", "ad8", "w", "ad9", "w", "ad10", "ad11", "w", "ad12", "ad13", ["more", 41], ["h", 16], "qpin", ["more", 40], ["h", 16], "route"];

/* ---------- body ---------- */
const Body = styled.div`height: 541px; flex: none; display: flex;`;
const SideBar = styled.div`
  width: 53px; flex: none; background: linear-gradient(90deg, #fafafa, #ebebeb);
  border-right: 1px solid ${LINE}; padding-top: 6px;
`;
const SideHandle = styled.div`
  width: 17px; height: 5px; margin: 0 0 2px 18px;
  background: radial-gradient(circle at 50% 50%, #b5b5b5 0.7px, transparent 1px) 0 0 / 3px 3px;
`;
const SideRow = styled.div`height: 32px; display: flex; align-items: center; padding-left: 8px; gap: 6px;`;

const LayersDock = styled.div`width: 393px; flex: none; display: flex; flex-direction: column;`;
const DockTitle = styled.div<{ $pl: number; $pr: number; $h: number }>`
  height: ${(p) => p.$h}px; flex: none; display: flex; align-items: center; gap: 3px;
  padding: 0 ${(p) => p.$pr}px 0 ${(p) => p.$pl}px;
  font: 12px/16px ${UI}; letter-spacing: -0.3px;
  span { flex: 1; }
`;
const DockTools = styled.div`height: 28px; margin-bottom: 2px; flex: none; display: flex; align-items: center; gap: 9px; padding: 0 0 0 7px;`;
const Tree = styled.div`height: 465px; flex: none; background: #fff; border: 1px solid ${LINE}; border-left: 0;`;
const LayerRow = styled.div<{ $sel?: boolean }>`
  height: 18px; display: flex; align-items: center; padding: 0 5px 0 23px;
  background: ${(p) => (p.$sel ? "linear-gradient(90deg, #0078d7 62px, #1583dd 62px)" : "none")};
  color: ${(p) => (p.$sel ? "#e8f3fc" : "#000")};
`;
const LayerName = styled.span<{ $sel?: boolean }>`
  flex: 1; font: 700 12px/16px ${UI}; padding-top: 2px;
  letter-spacing: ${(p) => (p.$sel ? "-0.47px" : "-0.7px")};
  text-decoration: ${(p) => (p.$sel ? "underline" : "none")}; text-underline-offset: 2px;
`;
const CheckBox = styled.span`
  width: 14px; height: 14px; flex: none; background: #fff; border: 1px solid #b9b9b9;
  display: flex; align-items: center; justify-content: center;
`;
const Check = () => <CheckBox><Svg $s={10} viewBox="0 0 10 10"><path d="M1.500 4.800L4 8.300 8.800 1" fill="none" stroke="#000" strokeWidth="1.800" /></Svg></CheckBox>;
const SymbolSlot = styled.span<{ $w: number }>`width: ${(p) => p.$w}px; padding-left: 6px; flex: none; display: flex;`;
const FilterBox = styled.span`width: 16px; height: 16px; background: #eef3f9; display: flex; align-items: center; justify-content: center;`;

const Tabs = styled.div`
  height: 25px; margin: 1px 0 0 -1px; flex: none; display: flex; align-items: flex-start; border-top: 1px solid ${LINE};
`;
const Tab = styled.div<{ $on?: boolean; $w: number }>`
  width: ${(p) => p.$w}px; height: ${(p) => (p.$on ? 22 : 20)}px;
  border: 1px solid ${LINE}; border-top: 0; border-radius: 0 0 2px 2px; margin-right: -1px;
  background: ${(p) => (p.$on ? "#f8f8f8" : "#dedede")};
  display: flex; align-items: center; justify-content: center;
  padding: 1px 2px 0 0; letter-spacing: -0.1px;
`;
const Canvas = styled.div`
  width: 682px; height: 540px; margin: 1px 0 0 6px; flex: none; background: #fff; border: 1px solid ${LINE};
`;

const Qms = styled.div`width: 226px; margin-left: 6px; flex: none; display: flex; flex-direction: column; overflow: hidden;`;
const Input = styled.div<{ $w: number; $h: number; $muted?: boolean }>`
  width: ${(p) => p.$w}px; height: ${(p) => p.$h}px; flex: none;
  background: #fff; border: 1px solid #aeaeae; border-radius: 2px;
  color: ${(p) => (p.$muted ? "#808080" : "#000")};
  display: flex; align-items: center; white-space: nowrap;
`;
const Inset = styled.span<{ $l: number }>`padding-left: ${(p) => p.$l}px; flex: 1;`;
const Button = styled.div<{ $w: number; $h?: number }>`
  width: ${(p) => p.$w}px; height: ${(p) => p.$h ?? 21}px; flex: none;
  border: 1px solid #adadad; border-radius: 2px; background: linear-gradient(#fdfdfd, #ededed);
  display: flex; align-items: center; justify-content: center; white-space: nowrap;
`;
const AddButton = styled(Button)`justify-content: flex-start; padding-left: 5px; letter-spacing: -0.1px;`;
const FilterRow = styled.div`display: flex; justify-content: flex-end; gap: 6px; margin: 6px 0;`;
const ServiceList = styled.div`height: 425px; flex: none; background: #fff; border: 1px solid ${LINE}; display: flex; flex-direction: column; overflow: hidden;`;
const LastUsed = styled.div`height: 15px; flex: none; padding: 1px 3px;`;
const Service = styled.div<{ $alt?: boolean; $h: number }>`
  height: ${(p) => p.$h}px; flex: none; background: ${(p) => (p.$alt ? "#e9e7e3" : "#fff")};
  display: flex; align-items: center; padding-left: 5px;
`;
const ServiceText = styled.div<{ $gap: number }>`
  width: 148px; margin-left: 6px; flex: none; display: flex; flex-direction: column; gap: ${(p) => p.$gap}px;
  padding-top: ${(p) => (p.$gap ? 0 : 2)}px;
  letter-spacing: -0.21px;
  b { font: 700 11px/13px ${TAHOMA}; white-space: pre-line; letter-spacing: 0.12px; }
`;
const Link = styled.span`color: #0000ff; text-decoration: underline;`;
const Status = styled.span`width: 11px; height: 11px; border-radius: 50%; background: #008000; flex: none; margin: 2px 8px 0 0;`;
const Filler = styled.div`flex: 1;`;
const ScrollBar = styled.div`height: 14px; flex: none; border-top: 1px solid ${LINE}; display: flex; background: #f4f4f4;`;
const ScrollCell = styled.div<{ $w?: number; $bg: string }>`
  ${(p) => (p.$w ? `width: ${p.$w}px;` : "flex: 1;")} background: ${(p) => p.$bg};
  border-right: 1px solid ${LINE}; display: flex; align-items: center; justify-content: center;
  &:last-child { border-right: 0; }
`;
const Fresh = styled.div`
  height: 32px; margin-top: 5px; flex: none; border: 1px solid ${LINE};
  display: flex; align-items: center; justify-content: center; gap: 4px; padding-top: 5px;
`;

const StatusBar = styled.div`height: 28px; flex: none; display: flex; align-items: center; padding-left: 4px; letter-spacing: -0.05px;`;
const Label = styled.span<{ $w: number; $l?: number; $ls?: number }>`
  width: ${(p) => p.$w}px; margin-left: ${(p) => p.$l ?? 0}px; flex: none; white-space: nowrap;
  letter-spacing: ${(p) => p.$ls ?? -0.05}px; padding-top: 1px;
`;
const Steps = styled.span<{ $w: number }>`
  width: ${(p) => p.$w}px; height: 100%; border-left: 1px solid ${LINE}; background: #f6f6f6;
  display: flex; flex-direction: column; align-items: center; justify-content: center; gap: 3px;
`;
const CaretUp = styled(Caret)`transform: rotate(180deg);`;
const StatusIcon = styled.span<{ $l: number; $r: number }>`margin: 0 ${(p) => p.$r}px 0 ${(p) => p.$l}px;`;

/* ---------- map drawing ---------- */
const rng = (seed: number) => () => {
  seed = (seed * 1664525 + 1013904223) % 4294967296;
  return seed / 4294967296;
};
/* street-like short lines around a heading; `cross` is the share that runs across it, `bend` how much they curve */
const streets = (seed: number, cx: number, cy: number, rx: number, ry: number, n: number, ang: number, len: number, cross = 0.4, bend = 0.9) => {
  const r = rng(seed);
  let d = "";
  for (let i = 0; i < n; i++) {
    const a = r() * 6.283, q = Math.pow(r(), 0.6);
    let x = cx + Math.cos(a) * q * rx, y = cy + Math.sin(a) * q * ry;
    let t = ang + (r() < cross ? 1.57 : 0) + (r() - 0.5) * bend * 0.6;
    d += `M${x.toFixed(1)} ${y.toFixed(1)}`;
    for (let k = 0; k < 4; k++) {
      const l = (len * (0.5 + r())) / 4;
      x += Math.cos(t) * l; y += Math.sin(t) * l; t += (r() - 0.5) * bend;
      d += `L${x.toFixed(1)} ${y.toFixed(1)}`;
    }
  }
  return d;
};
/* a jittered line through the given points */
const wiggle = (seed: number, pts: number[][], amp = 2.200, step = 4) => {
  const r = rng(seed);
  let d = `M${pts[0].join(" ")}`;
  for (let i = 1; i < pts.length; i++) {
    const [ax, ay] = pts[i - 1], [bx, by] = pts[i];
    const n = Math.max(1, Math.round(Math.hypot(bx - ax, by - ay) / step));
    for (let k = 1; k <= n; k++) {
      const j = k === n ? 0 : amp;
      d += `L${(ax + ((bx - ax) * k) / n + (r() - 0.5) * j).toFixed(1)} ${(ay + ((by - ay) * k) / n + (r() - 0.5) * j).toFixed(1)}`;
    }
  }
  return d;
};
/* county outline: straight survey lines in the west, river banks in the north and east */
const west: number[][] = [[692.3, 545], [690, 556.7], [685, 563], [682.7, 569.3], [675, 567], [666.7, 565], [660, 576.7], [646.7, 575], [643.3, 586.7], [639, 596], [626.7, 593.3], [621, 596.7], [622.3, 601.7], [616.7, 606.7], [615, 615], [610, 623.3], [605.7, 629.3], [599.3, 634.3], [596, 627.3], [596, 625], [470, 602.3], [486, 581.7], [509.3, 496.7], [526.7, 478.3], [528.3, 478.3], [537.3, 461.7], [544, 450], [541.7, 435], [547.3, 405], [547.3, 393.3], [543, 390], [540.7, 381.7], [540.7, 375], [536, 361.7], [529.3, 362.7], [522.3, 357.7], [529.3, 352.3], [516.7, 347.7], [516.7, 345], [525, 340], [524, 333.3], [535, 325], [543.3, 321], [551, 302.3], [543.3, 291], [542.3, 276.7], [566.7, 278.3], [566.7, 276], [605.3, 239], [593.3, 235], [584.7, 236], [590.7, 229.7], [593.3, 231.7], [597.3, 231.7], [603.3, 225.7], [613.3, 228.3], [620, 235]];
const north: number[][] = [[620, 235], [631.7, 245.7], [636.7, 254.3], [645, 264.3], [656.7, 271], [689, 281], [691, 290], [700, 294], [708, 297], [714, 303], [725, 306], [733, 312], [745, 315], [751, 322], [757, 325], [764, 333], [778, 347], [789, 356], [800, 365], [805, 366], [814, 370], [821.7, 384], [830.7, 386], [840, 395], [853.3, 403.3], [864, 413.3], [870, 422.7], [880, 427.3], [890, 425], [893, 421], [893.3, 412.7], [899.3, 420], [898, 424], [905, 422], [913, 427], [921.7, 430], [931.7, 432.7], [940, 441], [946.7, 439.3], [961.7, 441.7], [973.3, 436.7], [978, 435], [978.7, 428.3], [990, 434], [998.3, 430], [1008.3, 424.3], [1019.3, 416.7], [1026.7, 421.3], [1045, 416.7], [1053.3, 427.3], [1065, 439], [1076.7, 450], [1083, 455], [1091.7, 461.7], [1097, 463], [1100, 469], [1106.7, 470], [1116, 473.3]];
const south: number[][] = [[1116, 473.3], [1102, 489.3], [1090, 475], [1076.7, 463.3], [1060, 452.7], [1045, 454], [1031.7, 460.7], [1020, 459], [1003.3, 462.7], [996.7, 467.3], [988.3, 476], [986.7, 481.7], [977.3, 490], [980.7, 496.7], [986, 504], [984.3, 513.3], [982.7, 525], [975, 536.7], [964.3, 548.3], [962.7, 558.3], [961.7, 568.3], [950.7, 571.7], [941.7, 575], [936.7, 577.3], [934.3, 585], [929.3, 586], [928.3, 595], [923.3, 595], [912, 586], [916.7, 583.3], [913.3, 576], [907.3, 576.7], [894.3, 554], [880, 558.3], [870, 566.7], [858.3, 571.7], [856.7, 576.7], [850, 576.7], [841.7, 570], [830, 567.3], [820, 571.7], [800, 569.3], [788.3, 563.3], [783.3, 556], [793.3, 541.7], [805, 532.3], [796.7, 528.3], [786.7, 523.3], [771.7, 521.7], [766, 532.3], [772.7, 543.3], [760, 546.7], [746.7, 544], [743.3, 551.7], [737, 553.3], [736, 559.3], [728.3, 557.7], [724.3, 560.7], [692.3, 545]];
const COUNTY = `${wiggle(2, north, 1.800, 2.500)}${wiggle(7, south, 1.300, 3).replace("M", "L")}L${west.map((p) => p.join(" ")).join("L")}z`;

const pow: [number, number][] = [[551, 365], [551, 400], [563.7, 412], [536, 473], [645, 467], [652, 469], [630, 479], [587, 489.3], [575, 500], [576.7, 510], [578, 513.7], [578, 516.7], [577.6, 519.6], [579.7, 520], [594, 509], [594, 514.3], [607, 509], [622, 502], [645, 506], [660, 521], [601, 518.3], [604.7, 518.7], [603, 521], [601, 527.7], [599, 527], [582, 544], [621, 549], [640, 543], [638, 531], [649, 541], [647, 547], [656, 535], [656, 548], [666, 536], [684, 546], [706, 518], [731, 514], [755, 521], [735, 524], [730.3, 526], [733, 531.7], [726, 531], [720, 528.3], [727, 536], [718, 543], [597, 568], [539, 576], [519, 590], [521, 595], [589, 596], [597, 585], [598, 585.7], [787, 430], [803, 445], [881, 435], [880.7, 434.3], [890, 446], [898, 437], [906, 434], [902, 436], [911, 439], [914, 433.7], [920, 448], [925, 444], [940, 447], [958, 451], [859, 475], [860.3, 477.7], [864, 477.7], [828, 507], [826, 501.7], [836.7, 499.7], [833, 502], [813, 514], [818, 519], [820, 514], [818, 521.7], [920, 528]];
const schools: [number, number][] = [[587, 484], [644, 515], [794, 422]];

const rivers: number[][][] = [
  [[656, 271], [660, 280], [666, 282], [680, 283], [690, 290], [702, 296]],
  [[567, 309], [583, 309], [590, 313], [604, 313], [610, 309], [625, 321], [635, 328], [650, 341], [665, 354], [685, 361], [700, 361], [720, 374], [760, 384]],
  [[560, 342], [565, 353], [573, 368], [577, 386], [577, 403], [583, 408], [595, 405], [625, 411], [660, 415], [675, 422], [688, 434], [710, 445], [737, 461], [760, 478]],
  [[688, 311], [700, 316], [710, 324], [730, 332], [745, 345], [765, 356], [785, 365], [796, 388], [812, 392], [845, 410]],
  [[773, 385], [790, 402], [812, 425], [832, 442], [861, 462], [892, 484], [916, 497], [945, 505], [970, 499], [980, 490]],
  [[660, 458], [672, 456], [680, 462], [718, 472], [760, 483], [800, 505], [825, 520]],
  [[683, 477], [686, 482], [710, 487], [722, 499], [750, 505], [780, 518], [830, 530]],
  [[724, 508], [745, 515], [760, 518]],
  [[740, 463], [760, 475], [790, 486], [815, 505]],
  [[675, 420], [690, 424], [705, 436], [725, 452], [737, 461]],
  [[730, 358], [745, 372], [756, 385], [770, 394]],
  [[588, 580], [600, 595], [612, 606]], [[600, 586], [612, 599], [620, 605]],
  [[666, 549], [674, 555], [690, 556]], [[666, 554], [672, 560], [686, 562]],
  [[657, 491], [670, 499]], [[550, 344], [536, 355], [532, 362]], [[547, 374], [541, 380]],
  [[895, 555], [915, 553], [925, 557], [940, 550], [964, 553]],
  [[862, 492], [870, 515], [890, 523], [915, 528], [930, 545], [940, 550]],
];
const streams = () => {
  const r = rng(77);
  let d = "";
  for (let i = 0; i < 34; i++) {
    const x = 614 + r() * 54, y = 374 + (x - 612) * 0.3 + r() * 26;
    const l = 14 + r() * 30;
    d += wiggle(i + 5, [[x, y], [x + l * 0.2, y + 4 + r() * 6], [x + l * 0.55, y + l * 0.2 + r() * 6], [x + l, y + l * (0.3 + r() * 0.4)]], 3, 3);
  }
  return d;
};
const specks = (seed: number, cx: number, cy: number, rx: number, ry: number, n: number, s: number) => {
  const r = rng(seed);
  let d = "";
  for (let i = 0; i < n; i++) {
    const x = cx + (r() * 2 - 1) * rx, y = cy + (r() * 2 - 1) * ry, w = s * (0.6 + r());
    d += `M${x.toFixed(1)} ${y.toFixed(1)}l${w.toFixed(1)} ${(w * (r() - 0.3)).toFixed(1)} ${(-w * 0.4).toFixed(1)} ${w.toFixed(1)} ${(-w * 0.8).toFixed(1)} ${(-w * 0.3).toFixed(1)}z`;
  }
  return d;
};

const CountyMap = () => (
  <svg width="680" height="538" viewBox="453 161 680 538" display="block">
    <defs><clipPath id="county"><path d={COUNTY} /></clipPath></defs>
    <path d={COUNTY} fill="#c43c39" stroke="#232323" strokeWidth="1" />
    <g clipPath="url(#county)">
      {/* landuse */}
      <g fill="#ff9e17" stroke="#232323" strokeWidth="3">
        <g transform="translate(460 215) scale(.33333)">
          <path d="M560 165L685 197 690 215 678 240 682 270 690 285 625 328 640 348 653 360 640 375 606 370 592 360 588 380 563 397 587 432 565 465 530 485 512 485 505 505 465 540 420 542 385 525 350 515 350 485 357 460 365 437 372 308 393 265 490 250 498 225z" />
          <path d="M197 350L215 347 235 355 247 370 268 352 282 367 270 375 275 395 288 390 290 410 282 440 262 440 240 455 232 430 235 405 215 385 200 385z" />
          <path d="M280 455L288 453 300 470 297 477zM330 520L342 535V547L334 543zM413 542H440L455 555 460 572 430 562z" />
        </g>
        <g transform="translate(460 420) scale(.33333)">
          <path d="M425 30L483 15 498 38 480 75 465 90 445 93 440 78 430 65 408 48 430 55zM427 75L442 80 438 140 440 148 395 185 380 175 377 118 408 118 415 95z" />
          <path d="M335 70l10-3 5 6-12 4zM385 238l12-2 3 10-8 6zM268 267l10-2 2 12-8 3zM300 392l20-8 18 6-8 6-25 0zM330 392l10 20 5-2-8-20zM345 412l12 8 10-10 8 5-8 12 5 12-15-2-12-8zM832 345l18 0 3 10-12 7-12-6zM855 300l12-5 8 12-12 5zM438 508l10 2 2 8-8 0zM770 350l18 0-5 12zM590 268l8-2 4 8-8 2zM628 290l10 0 2 8-8-2zM370 458l8 0 2 5-8 0zM485 345l10 3-2 10-10-3zM336 447l8 3 2 5-8 0z" />
        </g>
      </g>
      {/* built-up areas and highways */}
      <g fill="#8f5b9a" stroke="none">
        <path d="M748 524l13-3 16 1-7 2-5 9 6 11-10 2-10-4 3-8zM783 556l10-14 12-9 8 7 3 5 14 2-4 6z" />
        <path d="M792 522l14-3 8-6 10-6 6-7 12-2 10-6 10 4 2 10 5 8-3 12 2 8-12 8-20-1-16-6-18-6-8-8z" opacity=".68" />
        <path d="M798 476l8-2 8 6 8 6 6 12-8 5-10-8-8-10z" opacity=".85" />
        <path d="M846 494l10-4 6 4 2 8-8 6-8-4zM914 460l10-3 8 6 0 6-8 4-8-6zM874 430l14-6 5-10 6 10 8 4-8 4-16 4zM893 482l12-3 8 8-12 4z" opacity=".85" />
      </g>
      <g fill="none" stroke="#8f5b9a" strokeWidth=".9">
        <path d={streets(3, 848, 468, 110, 74, 520, 0.6, 14)} opacity=".85" />
        <path d={streets(11, 776, 418, 44, 44, 140, 0.72, 24, 0.08, 0.6)} opacity=".75" />
        <path d={streets(13, 815, 425, 46, 32, 240, 0.9, 12)} opacity=".85" />
        <path d={streets(8, 812, 518, 64, 28, 400, 0.5, 11)} />
        <path d={streets(9, 845, 500, 42, 36, 400, 0.3, 8)} />
        <path d={streets(14, 848, 452, 34, 26, 220, 0.7, 9)} />
        <path d={streets(19, 918, 462, 50, 28, 380, 0.5, 8)} />
        <path d={streets(21, 895, 434, 34, 11, 200, 0.2, 8)} />
        <path d={streets(25, 945, 517, 36, 28, 110, 0.25, 22, 0.5, 0.15)} />
        <path d={streets(26, 905, 515, 34, 24, 110, 0.25, 14, 0.5, 0.3)} />
        <path d={streets(31, 766, 486, 34, 28, 110, 0.4, 18, 0.2)} opacity=".85" />
        <path d={streets(33, 965, 460, 20, 22, 150, 0.9, 7)} />
        <path d={streets(35, 806, 552, 26, 4, 100, 0, 10, 0.2)} />
        <path d={streets(37, 880, 540, 42, 10, 60, 0.1, 18, 0.2)} />
        <path d="M978 446l25 0 30 4 20-4 16 6 20 20 14 9M740 384l30 24 20 8M693 444l20 10 25 8M700 452l18-2 20 6 20 16M810 541l35 10 30-4 30 7M862 478l18 4 2 32" />
      </g>
      <g fill="none" stroke="#9478b8" strokeWidth=".9">
        <path d={wiggle(4, north.map(([x, y]) => [x - 0.8, y + 1.5]), 1.500, 2.500)} />
        {rivers.map((p, i) => <path key={i} d={wiggle(i + 1, p)} />)}
        <path d={streams()} opacity=".9" />
      </g>
      {/* small landuse parcels */}
      <g fill="#ff9e17" stroke="#232323" strokeWidth=".8">
        <path d="M814 441l16 11 6 12-3 3-8-8-13-11zM832 393l7 2-1 7-7-4zM850 410l5 0 9 6-4 1zM907 446l7 1-2 8-5-3zM894 442l5 1-1 7-4-1zM880 466l13 2-2 5-11-3zM823 495l9 0 0 4-9-1zM860 487l3 0-1 6-3 0zM912 530l7 5 5 5-3-1-7-5zM948 547l8 1-1 3-6-1zM868 465l8-4-1 5-6 2zM745 521l6-1-2 5z" />
        <path d={specks(41, 818, 474, 12, 7, 18, 1.700)} />
        <path d={specks(42, 834, 440, 16, 12, 14, 1.600)} strokeWidth=".4" />
        <path d={specks(43, 866, 462, 8, 12, 9, 1.800)} />
        <path d={specks(45, 624, 533, 4, 4, 4, 1.800)} />
        <path d={specks(46, 664, 512, 12, 5, 5, 1.600)} />
        <path d={specks(47, 903, 527, 8, 2, 5, 1.800)} />
        <path d={specks(48, 888, 460, 10, 14, 7, 2)} />
      </g>
      <g fill="#3a2c20" stroke="#3a2c20" strokeWidth=".3">
        <path d={specks(51, 679, 490, 15, 2.500, 22, 2)} />
        <path d={specks(63, 698, 495, 4, 6, 8, 1.700)} />
        <path d={specks(52, 692, 507, 4, 4, 9, 1.900)} />
        <path d={specks(53, 603, 502, 2, 2, 5, 2)} />
        <path d={specks(54, 650, 526, 3, 3, 6, 1.300)} />
        <path d={specks(55, 567, 372, 5, 6, 9, 1.300)} />
        <path d={specks(56, 655, 403, 12, 8, 14, 1.400)} />
        <path d={specks(57, 595, 399, 8, 5, 8, 1.100)} />
        <path d={specks(58, 625, 510, 60, 45, 22, 1.100)} />
        <path d={specks(59, 878, 524, 4, 4, 9, 1.400)} />
        <path d={specks(60, 732, 545, 7, 3, 6, 1.400)} />
        <path d={specks(61, 615, 490, 5, 5, 5, 1.400)} />
        <path d={specks(62, 840, 450, 60, 50, 22, 1.100)} />
      </g>
    </g>
    <path d={COUNTY} fill="none" stroke="#232323" strokeWidth=".6" opacity=".7" />
    <circle cx="525.500" cy="305.500" r=".8" fill="#888" />
    <g stroke="#35232a" strokeWidth="1.100">
      {pow.map(([x, y], i) => <circle key={i} cx={x} cy={y} r="3.700" fill="#e8718d" />)}
      {schools.map(([x, y], i) => <circle key={i} cx={x} cy={y} r="3.700" fill="#e77148" />)}
    </g>
  </svg>
);

/* ---------- data ---------- */
const menus: [string, string, string, number][] = [["Pro", "j", "ect", 51], ["", "E", "dit", 34], ["", "V", "iew", 39], ["", "L", "ayer", 42], ["", "S", "ettings", 56], ["", "P", "lugins", 53], ["Vect", "o", "r", 47], ["", "R", "aster", 46], ["", "D", "atabase", 62], ["", "W", "eb", 38], ["", "M", "esh", 43], ["Pro", "c", "essing", 71], ["", "H", "elp", 40]];
const side: [string, boolean][] = [["vAdd", false], ["raster", false], ["meshAdd", false], ["comma", false], ["featherAdd", false], ["virtualAdd", false], ["postgis", true], ["wms", true], ["xyz", false], ["wfs", true], ["vNew", true]];
const layers: { name: string; w: number; sym: React.ReactNode; sel?: boolean }[] = [
  { name: "schools_cleaned [3]", w: 28, sel: true, sym: <circle cx="8" cy="8" r="3.200" fill="#a8646a" stroke="#555" /> },
  { name: "kiambu_pow", w: 28, sym: <circle cx="8" cy="8" r="3.200" fill="#e8718d" stroke="#444" /> },
  { name: "kiambu_highways", w: 26, sym: <path d="M0 8h14" stroke="#a47fb4" strokeWidth="2" /> },
  { name: "waterway", w: 26, sym: <path d="M0 8h14" stroke="#b3a0cb" strokeWidth="2" /> },
  { name: "landuse", w: 28, sym: <rect x=".5" y=".5" width="15" height="15" fill="#ff9e17" stroke="#8a5a1c" /> },
  { name: "kiambu_admin_boundary", w: 28, sym: <rect x=".5" y=".5" width="15" height="15" fill="#c43c39" stroke="#6d2a28" /> },
];
const services = [
  { title: "ESRI Satellite (ArcGIS/\nWorld_Imagery)", h: 59, arc: true },
  { title: "Esri World Imagery", h: 56 },
  { title: "EOX::Maps - Sentinel-2\ncloudless", h: 59 },
  { title: "OpenStreetMap\nStandard aka Mapnik", h: 59 },
  { title: "Google Satellite", h: 56 },
];

const DockButtons = () => (
  <>
    <Svg $s={11} viewBox="0 0 11 11"><rect x=".5" y=".5" width="10" height="10" rx="2" fill="#f6f6f6" stroke="#666" /><path d="M4.500 4.500V2.500h4v4h-2M2.500 4.500h4v4h-4z" fill="none" stroke="#555" /></Svg>
    <Svg $s={11} viewBox="0 0 11 11"><rect x=".5" y=".5" width="10" height="10" rx="2" fill="#f6f6f6" stroke="#666" /><path d="M3 3l5 5M8 3L3 8" stroke="#444" strokeWidth="1.900" /></Svg>
  </>
);
const MapFold = () => (
  <Svg viewBox="0 0 24 24"><rect y="0" width="24" height="24" fill="#fff" opacity=".8" /><g fill="none" stroke="#2a78b8" strokeWidth="1.200"><path d="M.8 1.500l7.400 1.500L16 .5l7.200 1.500v18.500L16 19l-7.800 2.500L.8 20.500zM8.200 3V21.500M16 .5V19" /><path d="M1 6c4 2 3 8 7 12M1 12l6 7M9 17c3-4 4-9 7-11M9 12l6-7M16 6c3 3 4 9 7 12M5 2.500c0 5 1 8 3 10" strokeWidth=".7" /></g></Svg>
);
const ArcGis = () => (
  <Svg viewBox="0 0 24 24"><rect width="24" height="24" rx="2" fill="#15508a" /><path d="M0 0h24v4L0 6z" fill="#f6f8f2" /><path d="M0 3l10 4 14-6v7L12 12 0 16z" fill="#9bc53d" /><path d="M0 2l24 8v5L10 8 0 6z" fill="#f3c32f" /><path d="M0 11l10-3 14 7v2L8 12 0 15z" fill="#1a9a8a" /><text x="15" y="21" fontSize="4.500" fontFamily={UI} fill="#dbe8f5" textAnchor="middle">ArcGIS</text></Svg>
);

export default function App() {
  return (
    <Window>
      <Global />
      <TitleBar>
        <Svg $s={17} viewBox="0 0 24 24"><circle cx="11" cy="12" r="8.500" fill="none" stroke="#5f9a2c" strokeWidth="5.200" /><path d="M5 5.500a9 9 0 0112 0" fill="none" stroke="#93c04a" strokeWidth="3" /><path d="M12 12h5l6 7v4h-4l-7-7z" fill="#6aa832" stroke="#fff" /><path d="M11 11l5 1-4 4z" fill="#ee7913" /></Svg>
        <TitleText>*Untitled Project — QGIS</TitleText>
        <WindowButtons>
          <Svg $s={11} viewBox="0 0 11 11"><path d="M.5 5.500h10" stroke="#000" /></Svg>
          <Svg $s={11} viewBox="0 0 11 11"><path d="M.5 2.500h8v8h-8zM2.500 2.500v-2h8v8h-2" fill="none" stroke="#000" /></Svg>
          <Svg $s={11} viewBox="0 0 11 11"><path d="M.5.5l10 10M10.500.5l-10 10" stroke="#000" strokeWidth="1.100" /></Svg>
        </WindowButtons>
      </TitleBar>
      <MenuBar>{menus.map(([a, b, c, w], i) => <MenuItem key={i} $w={w}>{a}<u>{b}</u>{c}</MenuItem>)}</MenuBar>
      <ToolRow items={row1} h={40} top />
      <ToolRow items={row2} h={39} />
      <ToolRow items={row3} h={38} />
      <Body>
        <SideBar>
          <SideHandle />
          {side.map(([n, arrow]) => <SideRow key={n}><Icon n={n} />{arrow && <Caret />}</SideRow>)}
        </SideBar>
        <LayersDock>
          <DockTitle $pl={3} $pr={2} $h={21}><span>Layers</span><DockButtons /></DockTitle>
          <DockTools>
            <Svg $s={16} viewBox="0 0 16 16"><path d="M1 8l5-3 5 5-5 4-4-2z" fill="#f0b93a" /><path d="M1 8l4-3 1 4-3 2z" fill="#e35b4b" /><path d="M4 13l5-1 1 2-4 1z" fill="#58a" /><path d="M8 8l6-6" stroke="#c9622b" strokeWidth="3" /></Svg>
            <Svg $s={16} viewBox="0 0 16 16"><path d="M1.500 5.500h8v9h-8zM4 5V3h8v9M7 2.500V1h5.500v9" fill="#eee" stroke="#666" /><path d="M8 1v9" stroke="#5580b0" strokeWidth="1.400" /><rect x="9.500" y="9.500" width="6" height="6" fill="#5b8f5c" /><path d="M12.500 10.500v4M10.500 12.500h4" stroke="#fff" /></Svg>
            <Svg $s={16} viewBox="0 0 16 16"><path d="M.5 8C4 2.500 12 2.500 15 8c-4 4.500-11 4.500-14.500 0z" fill="#fff" stroke="#777" /><circle cx="7.500" cy="7.500" r="3" fill="#4d7ab0" /><circle cx="7.500" cy="7.500" r="1.200" fill="#111" /><path d="M2 4c3-3 9-3 12 0" stroke="#999" fill="none" /><path d="M11.500 13h5L14 15.500z" fill="#444" /></Svg>
            <Svg $s={16} viewBox="0 0 16 16"><path d="M1.500 3.500h13L10 9v6l-4-2V9z" fill="#5f8fc4" stroke="#41658e" strokeWidth=".8" /><rect x="1" y="1" width="14" height="2.500" fill="#f2d944" stroke="#a68d00" strokeWidth=".6" /></Svg>
            <Svg $s={16} viewBox="0 0 16 16"><text x="0" y="10" fontFamily={SERIF} fontSize="19" fill="#6b3a6b">ε</text><path d="M7 9h8l-2.500 2.500v4H9.500v-4z" fill="#aaa" stroke="#888" strokeWidth=".6" /></Svg>
            <ToolCaret />
            <Svg $s={16} viewBox="0 0 16 16"><path d="M2 1v12h3M2 6h3M1 1.500h9" stroke="#777" fill="none" /><rect x="4.500" y="4.500" width="3" height="3" fill="#f6c26a" stroke="#e08b1a" /><rect x="4.500" y="10.500" width="3" height="3" fill="#f6c26a" stroke="#e08b1a" /><path d="M9.500 2h3.500v6.500h2.500L11.300 14 7 8.500h2.500z" fill="#5f8fc4" stroke="#35577d" strokeWidth=".7" /></Svg>
            <Svg $s={16} viewBox="0 0 16 16"><path d="M2 1v12h3M2 6h3M1 1.500h6" stroke="#777" fill="none" /><rect x="4.500" y="4.500" width="3" height="3" fill="#f6c26a" stroke="#e08b1a" /><rect x="4.500" y="10.500" width="3" height="3" fill="#f6c26a" stroke="#e08b1a" /><path d="M9.500 14h3.500V7h2.500L11.300 1.500 7 7h2.500z" fill="#5f8fc4" stroke="#35577d" strokeWidth=".7" /></Svg>
            <Svg $s={16} viewBox="0 0 16 16"><rect x="1.500" y="1.500" width="11" height="11" fill="#f4f4f4" stroke="#777" /><rect x="9" y="9.500" width="6.500" height="5.500" rx="1" fill="#e0474c" /><path d="M10.500 12.200h3.500" stroke="#fff" strokeWidth="1.200" /></Svg>
          </DockTools>
          <Tree>
            {layers.map((l) => (
              <LayerRow key={l.name} $sel={l.sel}>
                <Check />
                <SymbolSlot $w={l.w}><Svg $s={16} viewBox="0 0 16 16">{l.sym}</Svg></SymbolSlot>
                <LayerName $sel={l.sel}>{l.name}</LayerName>
                {l.sel && <FilterBox><Svg $s={14} viewBox="0 0 14 14"><path d="M1 1.500h12v1.500L8.500 7.500V13h-3V7.500L1 3z" fill="#fff" stroke="#667" /></Svg></FilterBox>}
              </LayerRow>
            ))}
          </Tree>
          <Tabs><Tab $w={64}>Browser</Tab><Tab $w={56} $on>Layers</Tab></Tabs>
        </LayersDock>
        <Canvas><CountyMap /></Canvas>
        <Qms>
          <DockTitle $pl={4} $pr={2} $h={21}><span>Search QMS</span><DockButtons /></DockTitle>
          <Input $w={226} $h={21} $muted><Inset $l={1}>Search string...</Inset></Input>
          <FilterRow>
            <Button $w={82} $h={22}>Filter by extent</Button>
            <Button $w={72} $h={22}><Inset $l={4}>All</Inset><Caret /><Gap $w={6} /></Button>
          </FilterRow>
          <ServiceList>
            <LastUsed>Last used:</LastUsed>
            {services.map((s, i) => (
              <Service key={s.title} $h={s.h} $alt={i % 2 === 0}>
                {s.arc ? <ArcGis /> : <MapFold />}
                <ServiceText $gap={s.h === 56 ? 5 : 0}>
                  <b>{s.title}</b>
                  <span>TMS <Link>details</Link>, <Link>report a problem</Link></span>
                </ServiceText>
                <Status />
                <AddButton $w={34} $h={20}>Add</AddButton>
              </Service>
            ))}
            <Filler />
            <ScrollBar>
              <ScrollCell $w={14} $bg="#f6f6f6"><Svg $s={8} viewBox="0 0 8 8"><path d="M6 0v8L2 4z" fill="#555" /></Svg></ScrollCell>
              <ScrollCell $bg="#fbfbfb" />
              <ScrollCell $w={14} $bg="#e4e4e4" />
              <ScrollCell $w={14} $bg="#f6f6f6"><Svg $s={8} viewBox="0 0 8 8"><path d="M2 0v8l4-4z" fill="#555" /></Svg></ScrollCell>
            </ScrollBar>
          </ServiceList>
          <Fresh>
            <Svg $s={11} viewBox="0 0 11 12"><path d="M5.500 0c3 .5 3.500 3 3.500 5.500L10.500 9H.5L2 5.500C2 3 2.500.5 5.500 0zM4 10h3l-1.500 1.500z" fill="#ffab2e" /></Svg>
            <span><Link>Fresh geodata</Link> for your project</span>
          </Fresh>
        </Qms>
      </Body>
      <StatusBar>
        <Input $w={200} $h={22} $muted>
          <Gap $w={8} />
          <Svg $s={13} viewBox="0 0 13 13"><circle cx="5" cy="5" r="3.800" fill="none" stroke="#888" strokeWidth="1.300" /><path d="M8 8l4 4.500" stroke="#888" strokeWidth="2" /></Svg>
          <Inset $l={6}>Type to locate (Ctrl+K)</Inset>
        </Input>
        <Label $w={350} $l={7} $ls={-0.1}>Toggles the editing state of the current layer</Label>
        <Label $w={57}>Coordinate</Label>
        <Input $w={97} $h={22}><Inset $l={5}>266329,9845702</Inset></Input>
        <StatusIcon $l={4} $r={12}><Svg $s={16} viewBox="0 0 16 16"><path d="M2 3l5 9M6 1l4 8M2 3c0-2 3-3 4-2M3 6l4-2M4 9l5-2M7 12c1 3 5 4 6 1s-2-5-4-4M9 11l6-9M11 6l4-1" fill="none" stroke="#333" strokeWidth="1.200" /></Svg></StatusIcon>
        <Label $w={29}>Scale</Label>
        <Input $w={81} $h={22}><Inset $l={3}>1:566654</Inset><Steps $w={19}><Caret /></Steps></Input>
        <StatusIcon $l={11} $r={7}><Svg $s={14} viewBox="0 0 14 14"><path d="M3.500 6V4a3.500 3.500 0 017 0v2" fill="none" stroke="#777" strokeWidth="1.600" /><rect x="1" y="6" width="12" height="8" rx="1" fill="#555" /></Svg></StatusIcon>
        <Label $w={48}>Magnifier</Label>
        <Input $w={88} $h={22}><Inset $l={4}>100%</Inset><Steps $w={14}><CaretUp /><Caret /></Steps></Input>
        <Label $w={51} $l={8}>Rotation</Label>
        <Input $w={84} $h={22}><Inset $l={4}>0.0 °</Inset><Steps $w={14}><CaretUp /><Caret /></Steps></Input>
        <Gap $w={6} /><Check /><Label $w={36} $l={4}>Render</Label>
        <StatusIcon $l={17} $r={4}><Svg $s={14} viewBox="0 0 14 14"><circle cx="7" cy="7" r="6" fill="#aaa" stroke="#777" /><path d="M1 7h12M2.500 3.500h9M2.500 10.500h9M7 1v12M7 1c-4 4-4 8 0 12M7 1c4 4 4 8 0 12" stroke="#666" fill="none" strokeWidth=".8" /></Svg></StatusIcon>
        <Label $w={60}>EPSG:21037</Label>
        <StatusIcon $l={19} $r={0}><Svg $s={16} viewBox="0 0 16 16"><circle cx="8" cy="7" r="7" fill="#555" /><path d="M8 13l6 3-2-5z" fill="#555" /><path d="M3.500 7h2M7 7h2M10.500 7h2" stroke="#fff" strokeWidth="1.800" /></Svg></StatusIcon>
      </StatusBar>
    </Window>
  );
}
